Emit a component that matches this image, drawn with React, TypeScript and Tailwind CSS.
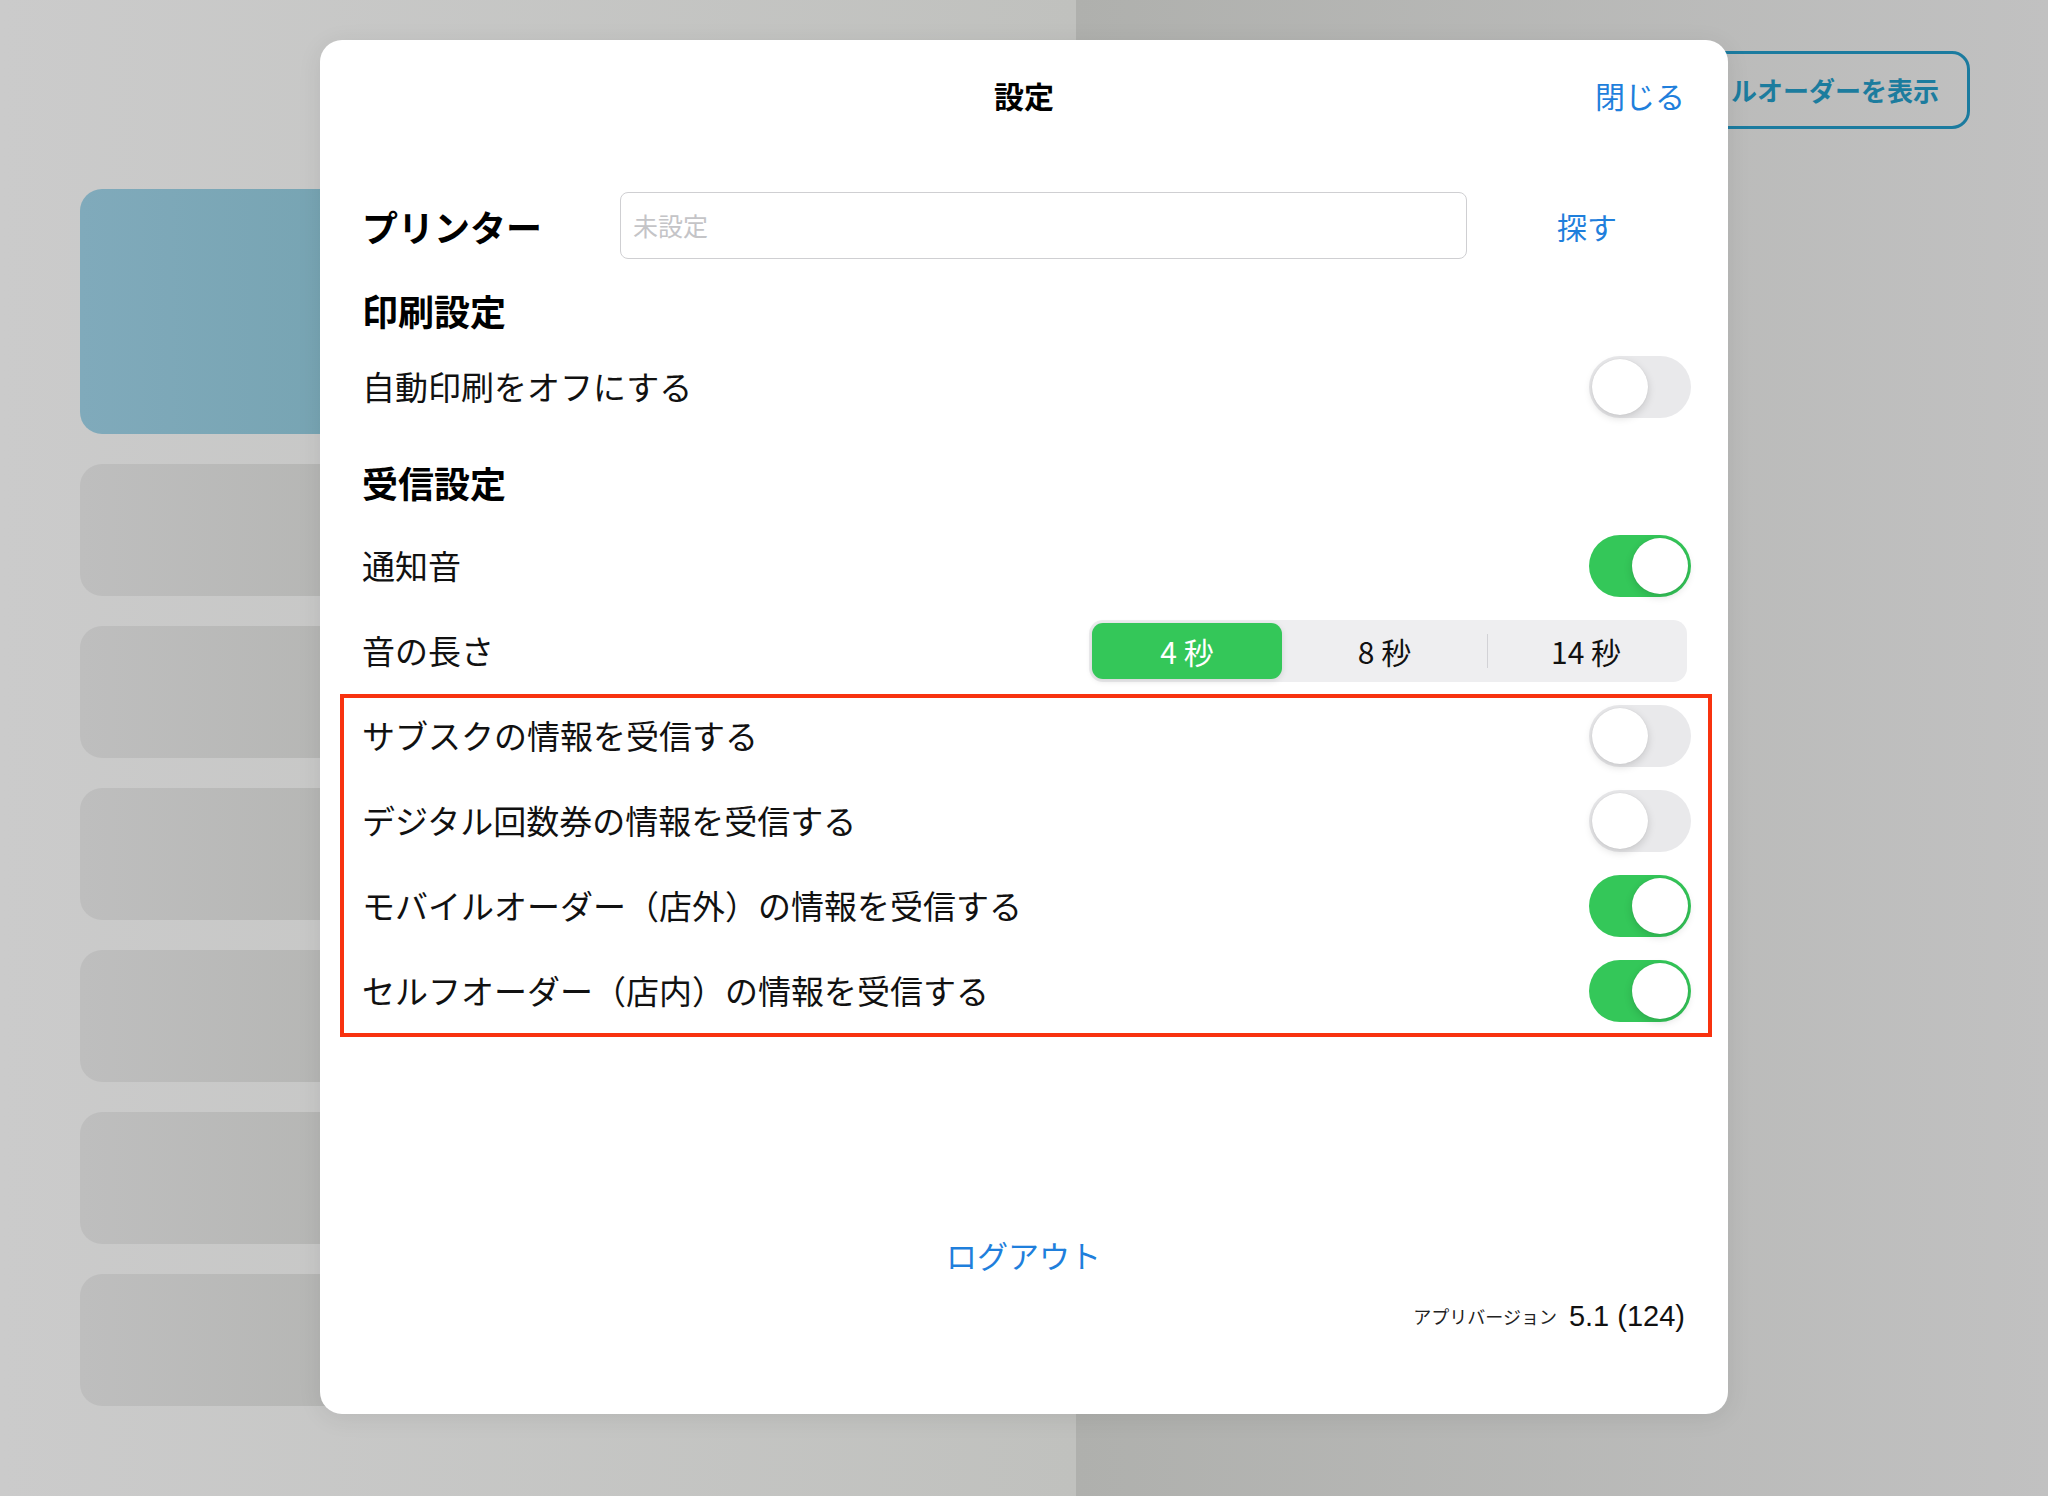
import React from 'react';

const jp = "font-['Noto_Sans_CJK_JP','Noto_Sans',sans-serif]";

function Toggle({ on }: { on: boolean }) {
  return (
    <div
      className={`w-[102px] h-[62px] rounded-full p-[3px] flex ${on ? 'bg-[#34c759] justify-end' : 'bg-[#e9e9eb] justify-start'}`}
    >
      <div className="w-[56px] h-[56px] rounded-full bg-white shadow-[0_3px_8px_rgba(0,0,0,0.15),0_0_1px_rgba(0,0,0,0.12)]" />
    </div>
  );
}

function Row({ label, children }: { label: string; children: React.ReactNode }) {
  return (
    <div className="h-[85px] flex items-center justify-between">
      <span className="text-[33px] leading-none text-[#111]">{label}</span>
      {children}
    </div>
  );
}

function Segmented() {
  return (
    <div className="w-[598px] h-[62px] mr-[4px] rounded-[14px] bg-[#eeeef0] p-[3px] flex items-stretch">
      <div className="w-[190px] rounded-[11px] bg-[#34c759] shadow-[0_2px_6px_rgba(0,0,0,0.12)] flex items-center justify-center text-white text-[30px] leading-none">
        4 秒
      </div>
      <div className="w-[205px] flex items-center justify-center text-[30px] leading-none text-[#111]">8 秒</div>
      <div className="w-px my-[11px] bg-[#d2d2d6]" />
      <div className="flex-1 flex items-center justify-center text-[30px] leading-none text-[#111]">14 秒</div>
    </div>
  );
}

function Settings() {
  return (
    <div className="absolute left-[320px] top-[40px] w-[1408px] h-[1374px] bg-white rounded-[22px] shadow-[0_4px_24px_rgba(0,0,0,0.08)]">
      <div className="grid grid-cols-[1fr_auto_1fr] items-center h-[110px]">
        <div />
        <span className="text-[30px] font-bold leading-none text-black">設定</span>
        <span className="justify-self-end pr-[43px] text-[30px] leading-none text-[#1f7fdc]">閉じる</span>
      </div>

      <div className="pl-[42px] pr-[37px]">
        <div className="mt-[42px] h-[67px] flex items-center">
          <span className="w-[258px] text-[36px] font-bold leading-none text-black">プリンター</span>
          <div className="w-[847px] h-[67px] border border-[#cfcfd2] rounded-[8px] flex items-center px-[12px]">
            <span className="text-[25px] leading-none text-[#c4c4c7]">未設定</span>
          </div>
          <span className="flex-1 pl-[16px] text-center text-[30px] leading-none text-[#1f7fdc]">探す</span>
        </div>

        <div className="mt-[17px] h-[68px] flex items-center">
          <span className="text-[36px] font-bold leading-none text-black">印刷設定</span>
        </div>
        <Row label="自動印刷をオフにする">
          <Toggle on={false} />
        </Row>

        <div className="mt-[19px] h-[68px] flex items-center">
          <span className="text-[36px] font-bold leading-none text-black">受信設定</span>
        </div>
        <div className="mt-[7px]">
          <Row label="通知音">
            <Toggle on={true} />
          </Row>
          <Row label="音の長さ">
            <Segmented />
          </Row>
          <div className="relative">
            <Row label="サブスクの情報を受信する">
              <Toggle on={false} />
            </Row>
            <Row label="デジタル回数券の情報を受信する">
              <Toggle on={false} />
            </Row>
            <Row label="モバイルオーダー（店外）の情報を受信する">
              <Toggle on={true} />
            </Row>
            <Row label="セルフオーダー（店内）の情報を受信する">
              <Toggle on={true} />
            </Row>
            <div className="absolute top-[1px] -bottom-[4px] -left-[22px] -right-[21px] border-4 border-[#f8320f] pointer-events-none" />
          </div>
        </div>

        <div className="mt-[191px] h-[60px] flex items-center justify-center">
          <span className="text-[31px] leading-none text-[#1f7fdc] -ml-[6px]">ログアウト</span>
        </div>
        <div className="mt-[12px] h-[40px] flex items-center justify-end gap-[12px] mr-[6px]">
          <span className="text-[18px] leading-none text-[#222]">アプリバージョン</span>
          <span className="text-[29px] leading-none text-[#111] font-['Liberation_Sans',sans-serif]">5.1 (124)</span>
        </div>
      </div>
    </div>
  );
}

export default function App() {
  const cards = [0, 1, 2, 3, 4, 5];

  return (
    <div className={`relative w-[2048px] h-[1496px] overflow-hidden flex ${jp}`}>
      <div className="w-[1076px] h-full bg-gradient-to-r from-[#cbcbcb] to-[#c0c1be] pt-[189px] pl-[80px] flex flex-col gap-[30px]">
        <div className="w-[400px] h-[245px] rounded-[22px] bg-gradient-to-r from-[#80aabb] to-[#72a1ae]" />
        {cards.map((i) => (
          <div key={i} className="w-[400px] h-[132px] rounded-[22px] bg-gradient-to-r from-[#bebebe] to-[#b1b2af]" />
        ))}
      </div>

      <div className="flex-1 h-full bg-gradient-to-r from-[#afb0ad] to-[#c1c1c1] flex flex-col items-end pt-[51px] pr-[78px]">
        <div className="h-[78px] pl-[48px] pr-[28px] border-[3px] border-[#1b7b9f] rounded-[18px] flex items-center">
          <span className="text-[26px] font-bold leading-none text-[#1c7c9e]">ルオーダーを表示</span>
        </div>
      </div>

      <Settings />
    </div>
  );
}
